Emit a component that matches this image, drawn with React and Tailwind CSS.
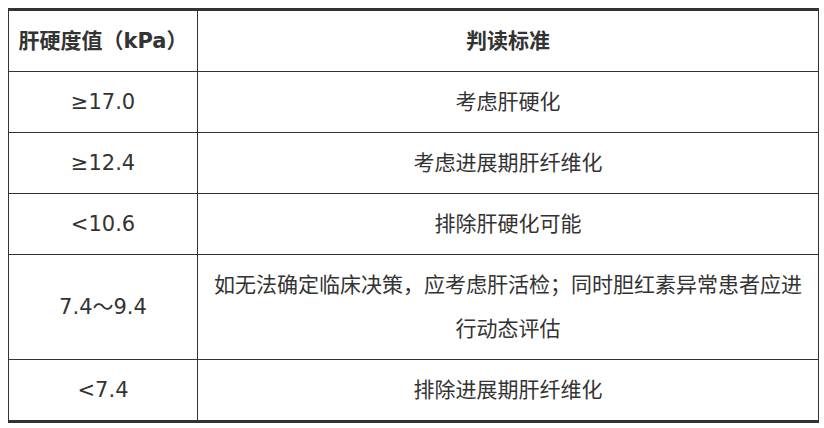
const rows = [
  { value: "≥17.0", text: "考虑肝硬化" },
  { value: "≥12.4", text: "考虑进展期肝纤维化" },
  { value: "<10.6", text: "排除肝硬化可能" },
  {
    value: "7.4～9.4",
    text: "如无法确定临床决策，应考虑肝活检；同时胆红素异常患者应进行动态评估",
  },
  { value: "<7.4", text: "排除进展期肝纤维化" },
];

export default function App() {
  return (
    <div className="bg-white w-[824px] h-[428px] pt-2 pl-2 font-['DejaVu_Sans','Noto_Sans_CJK_SC',sans-serif] text-[#333]">
      <table className="w-[811px] border-collapse table-fixed text-[21px] leading-[44px]">
        <colgroup>
          <col className="w-[189px]" />
          <col />
        </colgroup>
        <thead>
          <tr>
            <th className="border border-[#333] border-t-[3px] h-[60px] py-2 px-2 font-bold text-center">
              肝硬度值（kPa）
            </th>
            <th className="border border-[#333] border-t-[3px] h-[60px] py-2 px-2 font-bold text-center">
              判读标准
            </th>
          </tr>
        </thead>
        <tbody>
          {rows.map((r, i) => (
            <tr key={i}>
              <td
                className={
                  "border border-[#333] h-[60px] py-2 px-2 text-center font-normal" +
                  (i === rows.length - 1 ? " border-b-[3px]" : "")
                }
              >
                {r.value}
              </td>
              <td
                className={
                  "border border-[#333] h-[60px] py-2 px-[14px] text-center" +
                  (i === rows.length - 1 ? " border-b-[3px]" : "")
                }
              >
                {r.text}
              </td>
            </tr>
          ))}
        </tbody>
      </table>
    </div>
  );
}
